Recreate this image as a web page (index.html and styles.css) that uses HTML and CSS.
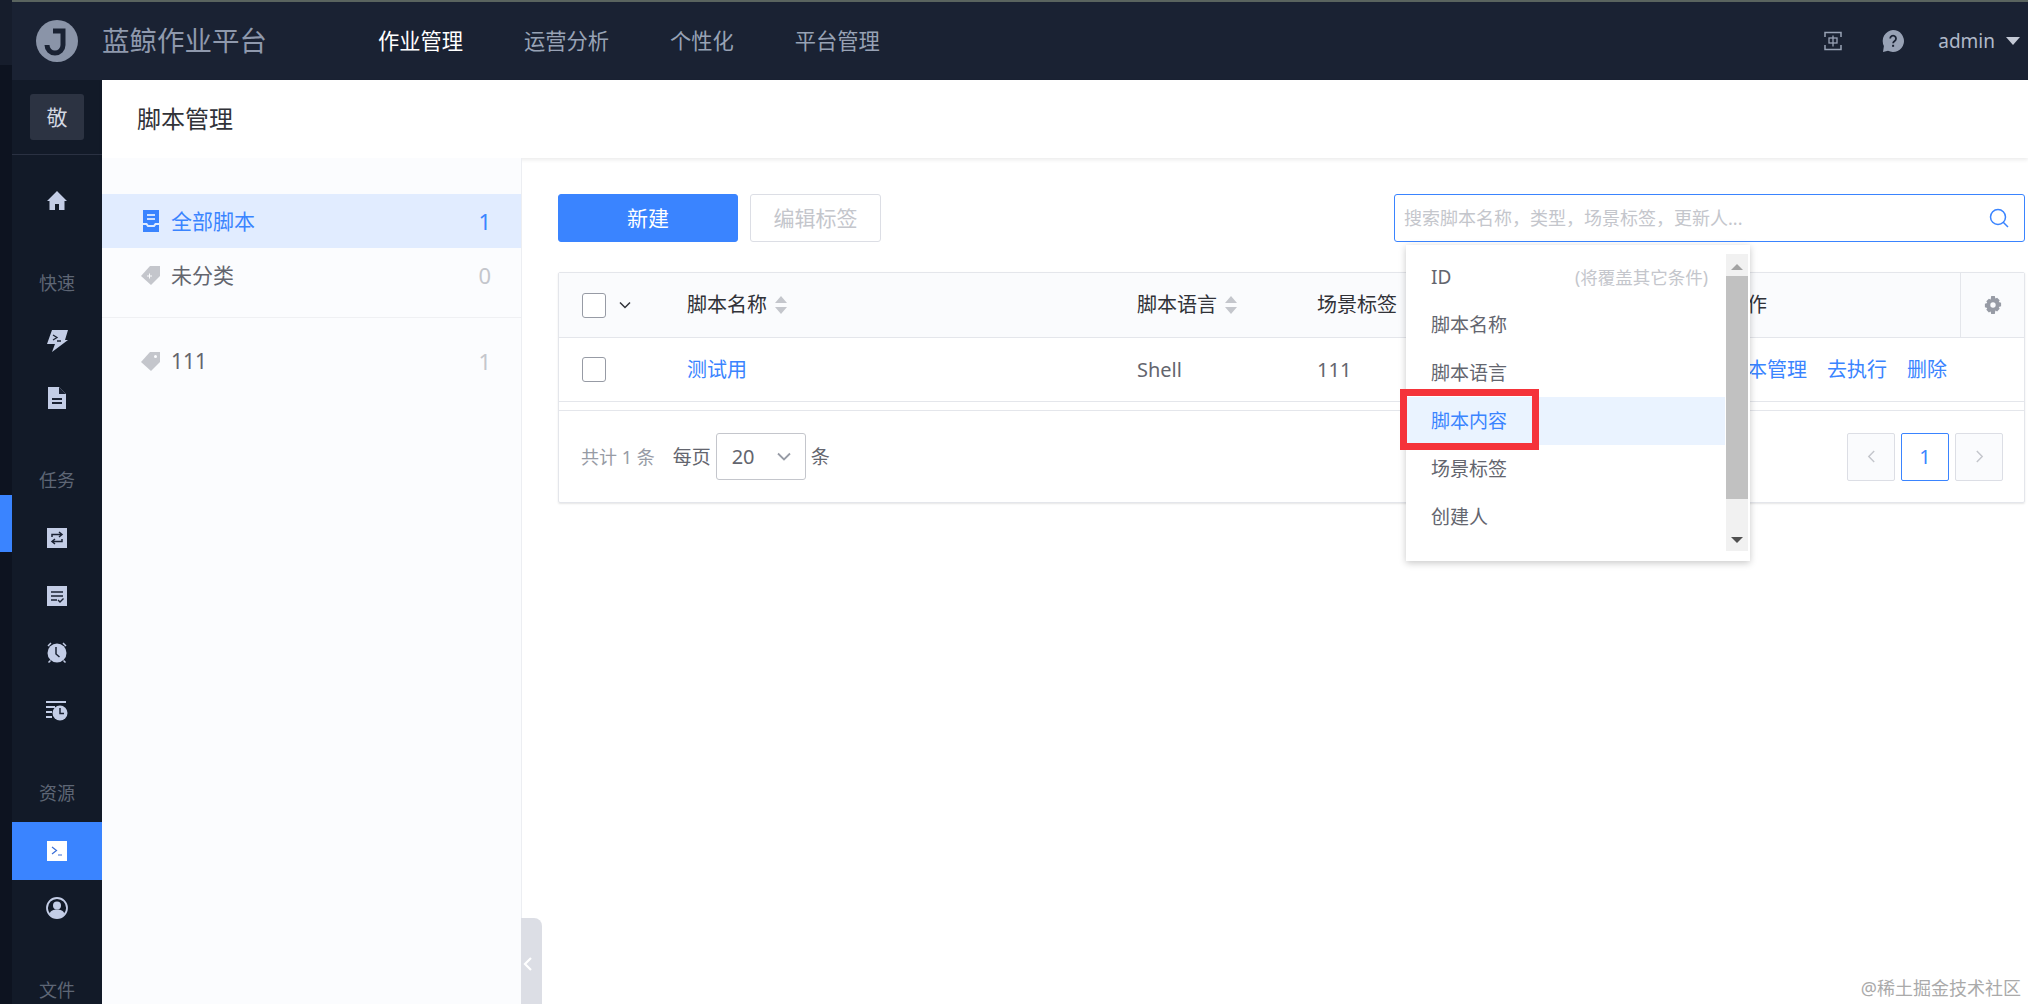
FILE: index.html
```html
<!DOCTYPE html>
<html lang="zh-CN">
<head>
<meta charset="utf-8">
<title>脚本管理</title>
<link rel="stylesheet" href="styles.css">
</head>
<body>
<div class="edge"><div class="edge-mark"></div></div>
<div class="app">
  <header class="topbar">
    <svg class="logo" viewBox="0 0 42 42" width="42" height="42"><circle cx="21" cy="21" r="21" fill="#8a94a8"/><path d="M17 11H27V25a8 8 0 0 1-16 0" fill="none" stroke="#1a2233" stroke-width="5"/></svg>
    <div class="brand">蓝鲸作业平台</div>
    <nav class="nav">
      <span class="nav-item nav-on">作业管理</span>
      <span class="nav-item">运营分析</span>
      <span class="nav-item">个性化</span>
      <span class="nav-item">平台管理</span>
    </nav>
    <div class="top-right">
      <svg class="lang" viewBox="0 0 18 20" width="18" height="20"><path d="M1 6V1.500h16V6M1 14v4.500h16V14" fill="none" stroke="#98a2b5" stroke-width="1.500"/><rect x="5" y="7" width="8" height="5" fill="none" stroke="#98a2b5" stroke-width="1.300"/><path d="M9 4.500v11" stroke="#98a2b5" stroke-width="1.300"/></svg>
      <svg class="help" viewBox="0 0 22 22" width="22" height="22"><path d="M11 0a11 11 0 1 1-5 20.800L1 22l.900-6A11 11 0 0 1 11 0z" fill="#98a2b5"/><path d="M8.200 8.500a2.900 2.900 0 1 1 4.500 2.400c-1.100.8-1.600 1.200-1.600 2.400" fill="none" stroke="#1a2233" stroke-width="1.800"/><rect x="10.100" y="14.800" width="2" height="2" fill="#1a2233"/></svg>
      <span class="user">admin</span>
      <span class="caret"></span>
    </div>
  </header>
  <div class="body">
    <aside class="side">
      <div class="biz"><span class="biz-box">敬</span></div>
      <div class="side-list">
        <div class="side-item"><svg viewBox="0 0 20 20" width="20" height="20"><path d="M10 0l10 10h-2.500v9H12v-6H8v6H2.500v-9H0z" fill="#c3cde6"/></svg></div>
        <div class="side-label">快速</div>
        <div class="side-item"><svg viewBox="0 0 22 24" width="22" height="24"><path d="M6 1h16l-3 10h3L6 23l3-8H1z" fill="#c3cde6"/><path d="M7 6l4 2.500-4 2.500M11 12h4" fill="none" stroke="#1a2233" stroke-width="1.300"/></svg></div>
        <div class="side-item"><svg viewBox="0 0 20 22" width="20" height="22"><path d="M1 0h11l7 7v15H1z" fill="#c3cde6"/><path d="M12 0v7h7z" fill="#1a2233"/><path d="M5 12h10M5 16h10" stroke="#1a2233" stroke-width="2"/></svg></div>
        <div class="side-label">任务</div>
        <div class="side-item"><svg viewBox="0 0 20 20" width="20" height="20"><rect width="20" height="20" fill="#c3cde6"/><path d="M5 9V6.500h9M12 4l3 2.500-3 2.500M15 11v2.500H6M8 16l-3-2.500L8 11" fill="none" stroke="#1a2233" stroke-width="1.500"/></svg></div>
        <div class="side-item"><svg viewBox="0 0 20 20" width="20" height="20"><rect width="20" height="20" fill="#c3cde6"/><path d="M4 6h12M4 10h12M4 14h6M11 14l2 2 3.500-3.500" fill="none" stroke="#1a2233" stroke-width="1.400"/></svg></div>
        <div class="side-item"><svg viewBox="0 0 22 22" width="22" height="22"><circle cx="11" cy="11" r="9.500" fill="#c3cde6"/><path d="M2 4l3-3M20 4l-3-3M2.500 20.500l2-2M19.500 20.500l-2-2" stroke="#c3cde6" stroke-width="1.500"/><path d="M10 5v7l3.500 3" fill="none" stroke="#1a2233" stroke-width="1.500"/></svg></div>
        <div class="side-item"><svg viewBox="0 0 22 20" width="22" height="20"><path d="M0 1h20M0 6h9M0 11h6M0 16h6" stroke="#c3cde6" stroke-width="2"/><circle cx="14" cy="12" r="7.500" fill="#c3cde6"/><path d="M14 7v5.500h4" fill="none" stroke="#1a2233" stroke-width="1.500"/></svg></div>
        <div class="side-label">资源</div>
        <div class="side-item side-on"><svg viewBox="0 0 20 20" width="20" height="20"><rect width="20" height="20" fill="#fff"/><path d="M5 6l4.500 3.500L5 13M11 14h4" fill="none" stroke="#3a6fd8" stroke-width="1.200"/></svg></div>
        <div class="side-item"><svg viewBox="0 0 22 22" width="22" height="22"><circle cx="11" cy="11" r="10" fill="none" stroke="#c3cde6" stroke-width="1.800"/><circle cx="11" cy="8.500" r="4" fill="#c3cde6"/><path d="M3.500 17c1-3.500 4-4.500 7.500-4.500s6.500 1 7.500 4.500A10 10 0 0 1 11 21a10 10 0 0 1-7.500-4z" fill="#c3cde6"/></svg></div>
        <div class="side-label">文件</div>
      </div>
    </aside>
    <main class="main">
      <div class="page-head">脚本管理</div>
      <div class="page-body">
        <section class="tags">
          <div class="tag-row tag-on">
            <svg viewBox="0 0 16 22" width="20" height="22"><path d="M0 0h16v13h-4l-1.500 2h-5L4 13H0z" fill="#3a84ff"/><path d="M0 15h3l1.500 2h7l1.500-2h3v7H0z" fill="#3a84ff"/><path d="M4 5h8M4 9h8" stroke="#fff" stroke-width="1.500"/></svg>
            <span class="tag-name">全部脚本</span><span class="tag-num">1</span>
          </div>
          <div class="tag-row">
            <svg viewBox="0 0 20 20" width="20" height="20"><path d="M9 1h10v10l-9 9-10-9z" fill="#c4c6cc"/><path d="M6 11h5M8.500 8.500v5" stroke="#fbfcfe" stroke-width="1"/></svg>
            <span class="tag-name">未分类</span><span class="tag-num">0</span>
          </div>
          <div class="tag-line"></div>
          <div class="tag-row">
            <svg viewBox="0 0 20 20" width="20" height="20"><path d="M9 1h10v10l-9 9-10-9z" fill="#c4c6cc"/><circle cx="14.500" cy="5.500" r="1.500" fill="#fbfcfe"/></svg>
            <span class="tag-name">111</span><span class="tag-num">1</span>
          </div>
          <div class="collapse"><svg viewBox="0 0 10 16" width="10" height="16"><path d="M8 2L2 8l6 6" fill="none" stroke="#fff" stroke-width="2.200"/></svg></div>
        </section>
        <section class="content">
          <div class="toolbar">
            <button class="btn btn-primary">新建</button>
            <button class="btn btn-off">编辑标签</button>
            <div class="search">
              <span class="placeholder">搜索脚本名称，类型，场景标签，更新人...</span>
              <svg viewBox="0 0 20 20" width="20" height="20"><circle cx="9" cy="9" r="7.500" fill="none" stroke="#3a84ff" stroke-width="1.500"/><path d="M14 14l5 5" stroke="#3a84ff" stroke-width="1.500"/></svg>
              <div class="drop">
                <ul class="drop-list">
                  <li class="drop-item"><span>ID</span><span class="drop-hint">(将覆盖其它条件)</span></li>
                  <li class="drop-item">脚本名称</li>
                  <li class="drop-item">脚本语言</li>
                  <li class="drop-item drop-on">脚本内容</li>
                  <li class="drop-item">场景标签</li>
                  <li class="drop-item">创建人</li>
                </ul>
                <div class="scroll">
                  <span class="arrow-up"></span>
                  <span class="thumb"></span>
                  <span class="arrow-down"></span>
                </div>
                <div class="mark"></div>
              </div>
            </div>
          </div>
          <div class="card">
            <div class="row row-head">
              <div class="cell-check"><span class="check"></span><svg viewBox="0 0 12 8" width="12" height="8"><path d="M1 1.500l5 5 5-5" fill="none" stroke="#313238" stroke-width="1.500"/></svg></div>
              <div class="th">脚本名称<svg class="sort" viewBox="0 0 14 20" width="14" height="20"><path d="M7 1l6 7H1zM7 19l6-7H1z" fill="#c4c6cc"/></svg></div>
              <div class="th">脚本语言<svg class="sort" viewBox="0 0 14 20" width="14" height="20"><path d="M7 1l6 7H1zM7 19l6-7H1z" fill="#c4c6cc"/></svg></div>
              <div class="th">场景标签</div>
              <div class="th">操作</div>
              <div class="th-gear"><svg viewBox="0 0 20 20" width="18" height="18"><path d="M8 0h4l.6 2.800 2-.9 2.800 2.800-1 2 2.600.8v4l-2.600.6 1 2.200-2.800 2.800-2-1L12 20H8l-.6-2.800-2 1-2.800-2.800 1-2.200L1 12.600v-4l2.600-.8-1-2 2.800-2.800 2 .9z" fill="#979ba5"/><circle cx="10" cy="10" r="3" fill="#fafbfd"/></svg></div>
            </div>
            <div class="row row-data">
              <div class="cell-check"><span class="check"></span></div>
              <div class="td td-link">测试用</div>
              <div class="td">Shell</div>
              <div class="td">111</div>
              <div class="td ops"><span>脚本管理</span><span>去执行</span><span>删除</span></div>
              <div></div>
            </div>
            <div class="foot">
              <span class="total">共计 1 条</span>
              <span class="per">每页</span>
              <span class="select">20<svg viewBox="0 0 14 9" width="14" height="9"><path d="M1 1.500l6 6 6-6" fill="none" stroke="#979ba5" stroke-width="1.800"/></svg></span>
              <span class="per-unit">条</span>
              <div class="pager">
                <span class="page-btn"><svg viewBox="0 0 10 16" width="9" height="15"><path d="M8 2L2 8l6 6" fill="none" stroke="#c4c6cc" stroke-width="1.600"/></svg></span>
                <span class="page-btn page-on">1</span>
                <span class="page-btn"><svg viewBox="0 0 10 16" width="9" height="15"><path d="M2 2l6 6-6 6" fill="none" stroke="#c4c6cc" stroke-width="1.600"/></svg></span>
              </div>
            </div>
          </div>
        </section>
      </div>
    </main>
  </div>
</div>
<div class="watermark">@稀土掘金技术社区</div>
</body>
</html>
```
FILE: styles.css
```css
* { box-sizing: border-box; }
html, body { margin: 0; height: 100%; }
body {
  display: flex;
  width: 2028px;
  height: 1004px;
  overflow: hidden;
  background: #fff;
  font-family: "Noto Sans", "Noto Sans CJK SC", sans-serif;
  color: #63656e;
  position: relative;
}
.edge {
  width: 12px; flex: none; padding-top: 495px;
  background: linear-gradient(#161d2c 65px, #0d1320 65px);
}
.edge-mark { height: 57px; background: #3a84ff; }
.app { flex: 1; display: flex; flex-direction: column; min-width: 0; }

.topbar {
  height: 80px;
  flex: none;
  display: flex;
  align-items: center;
  padding: 0 8px 0 24px;
  background: #1a2233;
  border-top: 2px solid #5a645f;
}
.logo { flex: none; margin-right: 24px; }
.brand { font-size: 27.500px; line-height: 40px; color: #8f99ad; }
.nav { display: flex; gap: 61px; margin-left: 111px; }
.nav-item { font-size: 21.250px; line-height: 30px; color: #98a2b5; }
.nav-on { color: #fff; }
.top-right { margin-left: auto; display: flex; align-items: center; }
.help { margin-left: 40px; margin-right: 34px; }
.user { font-size: 19px; line-height: 26px; color: #b0b9c9; }
.caret {
  margin-left: 11px;
  border-left: 7px solid transparent;
  border-right: 7px solid transparent;
  border-top: 8px solid #c4cad6;
}

.body { flex: 1; display: flex; min-height: 0; }
.side { width: 90px; flex: none; background: #121a28; }
.biz { height: 75px; padding: 14px 0 0 18px; border-bottom: 1px solid #2a3142; }
.biz-box {
  display: flex; width: 54px; height: 46px;
  align-items: center; justify-content: center;
  background: #2c3342; border-radius: 3px;
  color: #d3d8e2; font-size: 21px; line-height: 30px;
}
.side-list { padding-top: 17px; }
.side-item { height: 57.500px; display: flex; align-items: center; justify-content: center; }
.side-on { background: #3a84ff; }
.side-label {
  height: 82.500px; padding-top: 41px;
  text-align: center; font-size: 18px; line-height: 24px; color: #5e6675;
}

.main { flex: 1; display: flex; flex-direction: column; min-width: 0; }
.page-head {
  height: 78px; flex: none;
  padding-left: 35px;
  font-size: 24px; line-height: 78px; color: #313238;
  background: #fff;
  box-shadow: 0 2px 4px rgba(0, 0, 0, .08);
  position: relative;
}
.page-body { flex: 1; display: flex; min-height: 0; }

.tags {
  width: 420px; flex: none;
  padding-top: 36px;
  background: #fbfcfe;
  border-right: 1px solid #eceef2;
  position: relative;
}
.tag-row {
  height: 54px;
  display: flex; align-items: center;
  padding: 0 30px 0 39px;
  font-size: 21px; line-height: 30px; color: #63656e;
}
.tag-name { margin-left: 10px; }
.tag-num { margin-left: auto; color: #c4c6cc; font-size: 22px; }
.tag-on { background: #e1ecff; color: #3a84ff; }
.tag-on .tag-num { color: #3a84ff; }
.tag-line { height: 1px; background: #eff0f3; margin: 15px 0 16px; }
.collapse {
  position: absolute; left: 419px; bottom: 0;
  width: 21px; height: 86px;
  background: #dcdee5; border-radius: 0 8px 0 0;
  padding: 38px 0 0 2px;
}
.collapse svg { display: block; }

.content { flex: 1; min-width: 0; padding: 36px 3px 0 36px; }
.toolbar { display: flex; height: 48px; }
.btn {
  height: 48px; border-radius: 3px;
  font-family: inherit; font-size: 21px; line-height: 30px;
  padding: 0;
}
.btn-primary { width: 180px; background: #3a84ff; border: 1px solid #3a84ff; color: #fff; }
.btn-off { width: 131px; margin-left: 12px; background: #fff; border: 1px solid #dcdee5; color: #c4c6cc; }
.search {
  margin-left: auto; width: 631px; height: 48px;
  border: 1px solid #3a84ff; border-radius: 3px;
  display: flex; align-items: center; justify-content: space-between;
  padding: 0 15px 0 9px;
  position: relative;
}
.placeholder { font-size: 18px; line-height: 26px; color: #c4c6cc; }
.drop {
  position: absolute; left: 11px; top: 50px;
  width: 344px; height: 316px;
  background: #fff;
  box-shadow: 0 2px 7px rgba(0, 0, 0, .22);
  display: flex;
  z-index: 5;
}
.drop-list { list-style: none; margin: 0; padding: 8px 0 0; flex: 1; min-width: 0; }
.drop-item {
  height: 48px; padding: 0 17px 0 25px;
  display: flex; align-items: center; justify-content: space-between;
  font-size: 19px; line-height: 26px; color: #63656e;
}
.drop-on { background: #eaf3ff; color: #3a84ff; }
.drop-hint { font-size: 17.500px; color: #c4c6cc; }
.scroll {
  width: 22px; height: 297px; flex: none;
  margin: 9px 2px 0 1px;
  background: #f1f1f1;
  display: flex; flex-direction: column; align-items: center;
}
.arrow-up {
  margin-top: 10px; height: 0;
  border-left: 6px solid transparent; border-right: 6px solid transparent;
  border-bottom: 6px solid #a3a3a3;
}
.thumb { width: 100%; height: 223px; margin-top: 6px; background: #c1c1c1; }
.arrow-down {
  margin-top: 38px; height: 0;
  border-left: 6px solid transparent; border-right: 6px solid transparent;
  border-top: 6px solid #505050;
}
.mark {
  position: absolute; left: -6px; top: 144px;
  width: 139px; height: 61px;
  border: 7px solid #f5333a;
}

.card {
  margin-top: 30px;
  border: 1px solid #e4e6eb;
  border-radius: 2px;
  box-shadow: 0 1px 2px rgba(0, 0, 0, .1);
}
.row {
  display: grid;
  grid-template-columns: 128px 450px 180px 410px 1fr 64px;
  align-items: center;
  font-size: 20px; line-height: 28px;
  border-bottom: 1px solid #e4e6eb;
}
.row-head { height: 65px; background: #fafbfd; color: #313238; }
.row-data { height: 64px; }
.cell-check { display: flex; align-items: center; padding-left: 23px; }
.cell-check svg { margin-left: 13px; }
.check {
  width: 24px; height: 25px; flex: none;
  border: 1px solid #979ba5; border-radius: 3px; background: #fff;
}
.th { display: flex; align-items: center; }
.sort { margin-left: 7px; }
.th-gear {
  height: 100%;
  display: flex; align-items: center; justify-content: center;
  border-left: 1px solid #e4e6eb;
}
.td-link { color: #3a84ff; }
.ops { display: flex; gap: 20px; color: #3a84ff; white-space: nowrap; }
.foot {
  margin-top: 8px;
  height: 92px;
  border-top: 1px solid #e4e6eb;
  display: flex; align-items: center;
  padding: 0 21px 0 22px;
  font-size: 19px; line-height: 26px;
}
.total { font-size: 18px; color: #979ba5; }
.per { margin-left: 18px; }
.select {
  width: 90px; height: 47px; margin-left: 5px;
  border: 1px solid #c4c6cc; border-radius: 3px;
  display: flex; align-items: center; justify-content: space-between;
  padding: 0 14px 0 15px;
  font-size: 20px;
}
.per-unit { margin-left: 5px; }
.pager { margin-left: auto; display: flex; gap: 6px; }
.page-btn {
  width: 48px; height: 48px;
  display: flex; align-items: center; justify-content: center;
  border: 1px solid #dcdee5; border-radius: 2px;
  background: #fafbfd;
  font-size: 20px;
}
.page-on { border-color: #3a84ff; color: #3a84ff; background: #fff; }

.watermark {
  position: absolute; right: 7px; bottom: 4px;
  font-size: 18px; line-height: 24px; color: #aaa;
  white-space: nowrap;
}
```
